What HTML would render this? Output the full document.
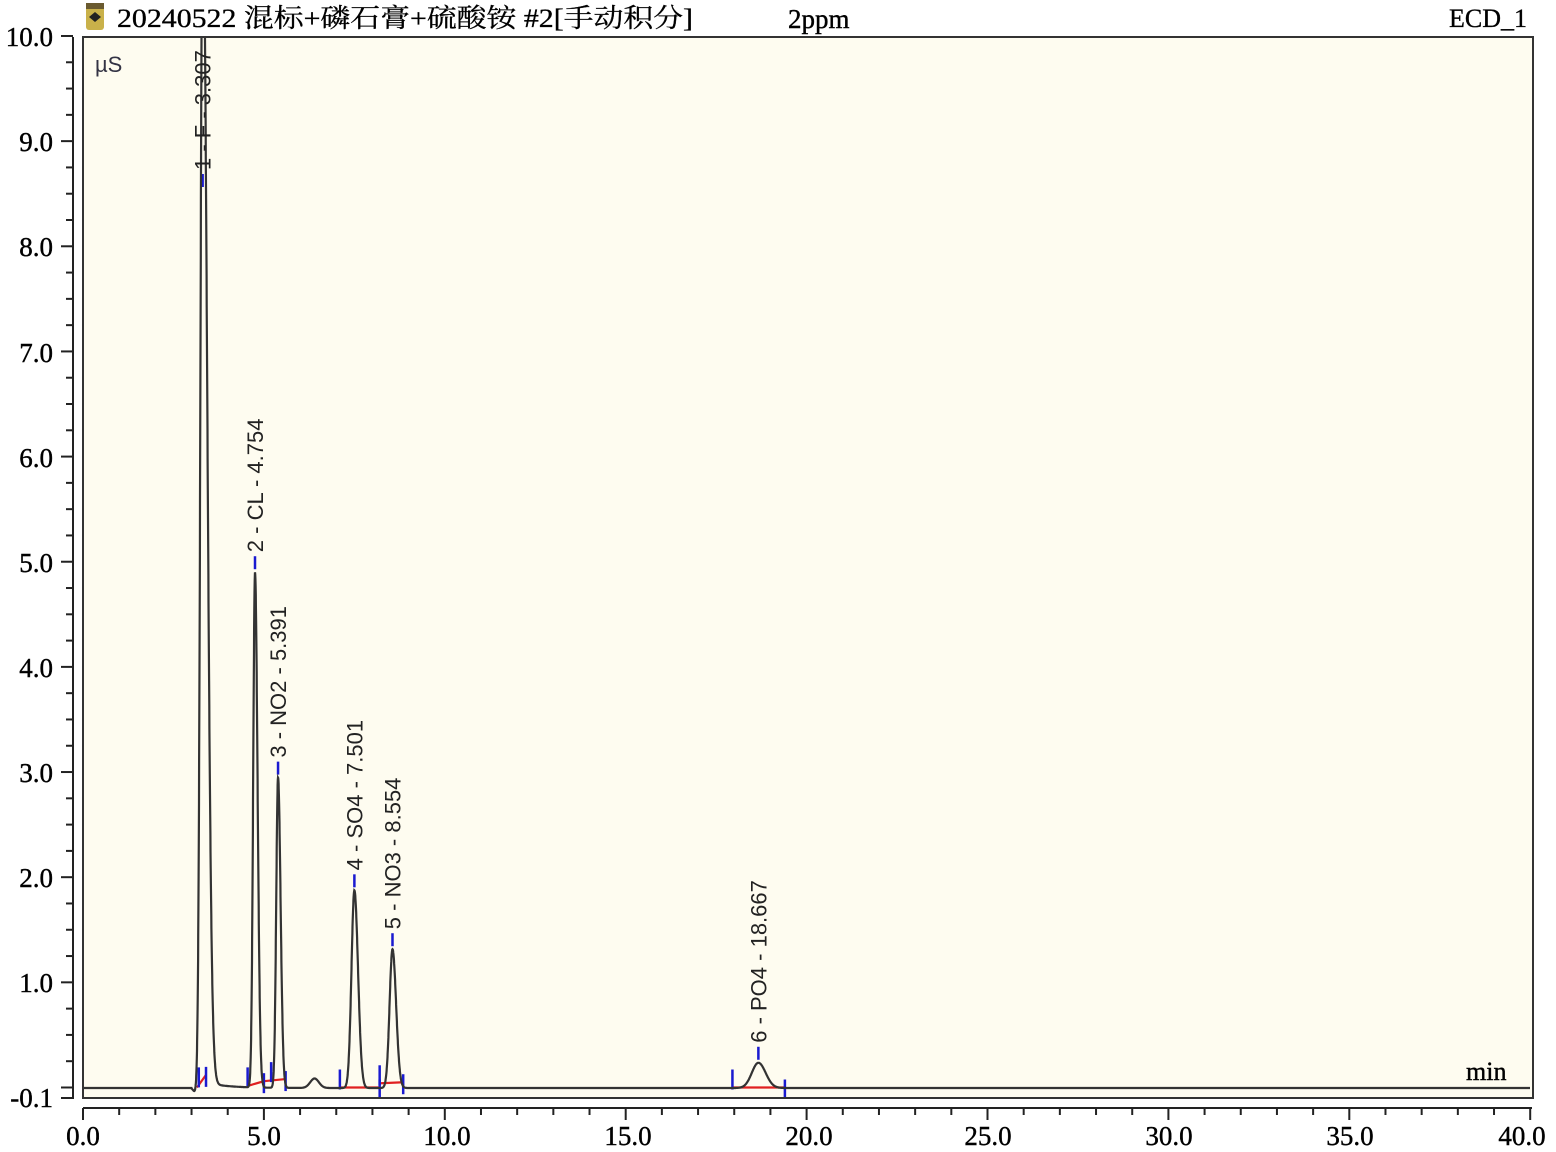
<!DOCTYPE html>
<html><head><meta charset="utf-8"><style>
html,body{margin:0;padding:0;background:#fff;}
body{width:1556px;height:1152px;overflow:hidden;position:relative;}
svg{position:absolute;left:0;top:0;}
.serif{font-family:"Liberation Serif","Noto Serif CJK SC",serif;}
.sans{font-family:"Liberation Sans",sans-serif;}
</style></head><body>
<svg id="s" width="1556" height="1152" viewBox="0 0 1556 1152">
<rect x="83" y="37" width="1450" height="1061" fill="#fefcf0" stroke="#333" stroke-width="2"/>
<line x1="73" y1="37" x2="73" y2="1099" stroke="#222" stroke-width="2"/>
<line x1="83" y1="1108" x2="1532" y2="1108" stroke="#222" stroke-width="2"/>
<g id="ticks" stroke="#222" stroke-width="2"></g>
<rect x="80" y="0" width="810" height="35" fill="#fff"/>
<g class="serif" font-size="27" fill="#000" stroke="#000" stroke-width="0.4" text-anchor="end">
<text x="53" y="46">10.0</text><text x="53" y="151">9.0</text><text x="53" y="256">8.0</text>
<text x="53" y="362">7.0</text><text x="53" y="467">6.0</text><text x="53" y="572">5.0</text>
<text x="53" y="677">4.0</text><text x="53" y="782">3.0</text><text x="53" y="887">2.0</text>
<text x="53" y="992">1.0</text><text x="53" y="1107">-0.1</text>
</g>
<g class="serif" font-size="27" fill="#000" stroke="#000" stroke-width="0.4" text-anchor="middle">
<text x="83" y="1145">0.0</text><text x="264" y="1145">5.0</text><text x="447" y="1145">10.0</text>
<text x="628" y="1145">15.0</text><text x="809" y="1145">20.0</text><text x="988" y="1145">25.0</text>
<text x="1169" y="1145">30.0</text><text x="1350" y="1145">35.0</text><text x="1522" y="1145">40.0</text>
</g>
<text class="sans" x="95" y="72" font-size="22" fill="#334">µS</text>
<text class="serif" x="1466" y="1080" font-size="26" stroke="#000" stroke-width="0.4">min</text>
<rect x="86" y="3" width="18" height="27" rx="3" fill="#c9b14a"/>
<rect x="86" y="3" width="18" height="6" fill="#6a5a30"/>
<path d="M89 17 L95 12 L101 17 L95 22 Z" fill="#222"/>
<text class="serif" x="117" y="27" font-size="26" textLength="576" lengthAdjust="spacingAndGlyphs" stroke="#000" stroke-width="0.3">20240522 混标+磷石膏+硫酸铵  #2[手动积分]</text>
<text class="serif" x="788" y="28" font-size="27" stroke="#000" stroke-width="0.4">2ppm</text>
<text class="serif" x="1527" y="27" font-size="26" text-anchor="end" stroke="#000" stroke-width="0.3">ECD_1</text>
<clipPath id="c"><rect x="84" y="38" width="1448" height="1059"/></clipPath>
<g clip-path="url(#c)">
<g id="marks"></g>
<path id="tr" fill="none" stroke="#333" stroke-width="2.2"/>
<g id="labels" class="sans" font-size="22" fill="#222"></g>
</g>
</svg>
<script>
var NS="http://www.w3.org/2000/svg";
function X(t){return 83+t*36.18;}
function Y(v){return 1098-(v+0.1)*105.15;}
function el(p,tag,a,txt){var e=document.createElementNS(NS,tag);for(var k in a)e.setAttribute(k,a[k]);if(txt)e.textContent=txt;p.appendChild(e);return e;}
var tk=document.getElementById('ticks');
for(var i=0;i<=40;i++){var v=10-i*0.25;var y=Y(v);if(v<-0.1)break;el(tk,'line',{x1:(i%4==0?61:66),y1:y,x2:73,y2:y});}
el(tk,'line',{x1:61,y1:1098,x2:73,y2:1098});
for(var t=0;t<=40;t++){var x=X(t);el(tk,'line',{x1:x,y1:1108,x2:x,y2:(t%5==0?1120:1115)});}
var peaks=[[3.307,11.5,0.06,0.12],[4.754,4.9,0.05,0.07],[5.391,2.95,0.05,0.07],[6.4,0.09,0.12,0.12],[7.501,1.88,0.08,0.1],[8.554,1.32,0.08,0.1],[18.667,0.24,0.18,0.2]];
function f(t){var s=-0.005;for(var i=0;i<peaks.length;i++){var p=peaks[i];var sg=t<p[0]?p[2]:p[3];var d=(t-p[0])/sg;s+=p[1]*Math.exp(-0.5*d*d);}
 if(t>3.0&&t<3.4)s-=0.04*Math.exp(-0.5*Math.pow((t-3.1)/0.05,2));
 if(t>3.3)s+=0.06*Math.exp(-(t-3.3)/0.6);
 return s;}
var d="";for(var t=0;t<=40;t+=0.005){d+=(t==0?"M":"L")+X(t).toFixed(1)+" "+Y(f(t)).toFixed(1);}
document.getElementById('tr').setAttribute('d',d);
var mk=document.getElementById('marks');
function red(a,va,b,vb){el(mk,'line',{x1:X(a),y1:Y(va),x2:X(b),y2:Y(vb),stroke:'#e02020','stroke-width':2.2});}
red(3.15,0.0,3.4,0.12);red(4.6,0.02,5.0,0.06);red(5.0,0.06,5.6,0.08);red(7.1,0.0,8.2,0.0);red(8.2,0.04,8.85,0.05);red(17.95,0.0,19.4,0.0);
var bl=[[3.2,1,0.02],[3.4,0,0.12],[4.55,1,0.02],[5.0,0,0.06],[5.2,1,0.07],[5.6,0,0.08],[7.1,1,0.0],[8.2,0,0.0],[8.2,1,0.04],[8.85,0,0.05],[17.95,1,0.0],[19.4,0,0.0]];
bl.forEach(function(b){var x=X(b[0]);var y=Y(b[2]);if(b[1])el(mk,'line',{x1:x,y1:y+2,x2:x,y2:y-18,stroke:'#1a1ad0','stroke-width':2.5});else el(mk,'line',{x1:x,y1:y-8,x2:x,y2:y+12,stroke:'#1a1ad0','stroke-width':2.5});});
var lab=document.getElementById('labels');
var L=[[3.307,"1 - F - 3.307"],[4.754,"2 - CL - 4.754"],[5.391,"3 - NO2 - 5.391"],[7.501,"4 - SO4 - 7.501"],[8.554,"5 - NO3 - 8.554"],[18.667,"6 - PO4 - 18.667"]];
L.forEach(function(l){var x=X(l[0]);var y=Math.max(Y(f(l[0])),190);
 el(mk,'line',{x1:x,y1:y-3,x2:x,y2:y-16,stroke:'#1a1ad0','stroke-width':2.5});
 el(lab,'text',{x:0,y:0,transform:'translate('+(x+8)+','+(y-20)+') rotate(-90)'},l[1]);});
</script>
</body></html>
